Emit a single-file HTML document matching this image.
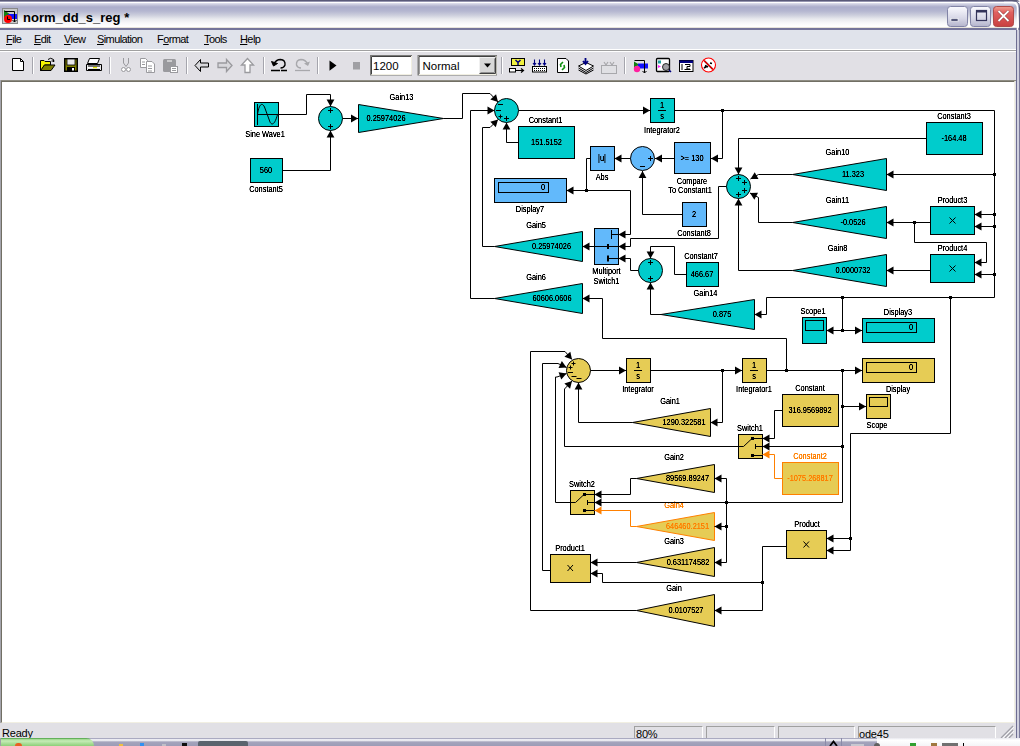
<!DOCTYPE html>
<html><head><meta charset="utf-8"><style>
*{margin:0;padding:0;box-sizing:border-box}
html,body{width:1020px;height:746px;overflow:hidden;background:#fff;font-family:"Liberation Sans",sans-serif}
.abs{position:absolute}
#title{left:0;top:0;width:1020px;height:30px;
 background:linear-gradient(to bottom,#5a5a78 0px,#5a5a78 1px,#9696b0 1px,#9696b0 2px,#ffffff 2px,#ffffff 3px,#e2e2ee 3px,#c4c5da 5px,#acaecb 7px,#b4b6d0 11px,#cbcddc 15px,#e8e9ee 19px,#f8f8fa 23px,#ffffff 26px,#ffffff 27px,#e8e4dc 27px,#e8e4dc 28px,#74749a 28px,#74749a 30px)}
#ttext{left:23px;top:10px;font-size:13px;font-weight:bold;color:#000;letter-spacing:0px}
#menu{left:0;top:30px;width:1016px;height:19px;background:#e0e3eb;font-size:11px}
#menu span{position:absolute;top:3px;letter-spacing:-0.6px}
#sep1{left:0;top:49px;width:1016px;height:3px;background:linear-gradient(to bottom,#fff 0,#fff 1px,#a0a0a0 1px,#a0a0a0 2px,#fff 2px)}
#tool{left:0;top:52px;width:1016px;height:28px;background:#e1e0e5}
#canvas{left:1px;top:80px;width:1014px;height:643px;background:#fff;border-top:2px solid #716f64;border-left:1px solid #716f64;border-right:1px solid #f1efe2;border-bottom:1px solid #f1efe2}
#status{left:0;top:723px;width:1016px;height:15px;background:#e1e0e5;font-size:11px}
#frameR{left:1016px;top:30px;width:4px;height:708px;background:linear-gradient(to right,#6e6e92 0,#6e6e92 1px,#8e8eaa 1px,#8e8eaa 1.5px,#d0d0de 1.5px,#d0d0de 3px,#7a7a9a 3px)}
#task{left:0;top:738px;width:1020px;height:8px;background:linear-gradient(to bottom,#7c7c9c 0,#d8d8e6 1px,#ffffff 2px,#a4a4bc 4px,#9c9cb6 8px)}
#start{left:0;top:738px;width:94px;height:8px;background:linear-gradient(to bottom,#2c8a2c 0,#9ad68a 1px,#c6ecb6 3px,#8ccf78 8px);border-top-right-radius:8px}
.sp{position:absolute;top:726px;height:12px;border-top:1px solid #a0a0a0;border-left:1px solid #a0a0a0;border-right:1px solid #fff}
svg text{font-family:"Liberation Sans",sans-serif}
</style></head><body>
<div id="title" class="abs"></div>
<svg class="abs" style="left:1004px;top:0" width="16" height="30"><path d="M0,0.5H8Q15.5,0.5 15.5,8V30" fill="none" stroke="#5a5a78"/><path d="M0,2.5H8Q13.5,2.5 13.5,8V30" fill="none" stroke="#fff" stroke-width="1.5"/><path d="M15,0V30" stroke="#9a9ab4" stroke-width="0"/><rect x="16" y="0" width="0" height="0"/><path d="M12,0H16V4Q16,0 12,0Z" fill="#f4eef0"/></svg>
<svg class="abs" style="left:2px;top:8px" width="17" height="16" viewBox="0 0 17 16">
<rect x="0.5" y="0.5" width="15" height="15" fill="#c8c8c8" stroke="#888"/>
<polygon points="2,2 9,7 2,11" fill="#108010"/><rect x="6" y="6" width="9" height="5" fill="#1010ff"/>
<circle cx="6" cy="11" r="4" fill="#ff0000"/><path d="M2.5,3.5H12.5V14M10.5,12L12.5,14L14.5,12M5.5,8.5V11.5H8" stroke="#000" fill="none"/>
</svg>
<div id="ttext" class="abs">norm_dd_s_reg *</div>
<svg class="abs" style="left:947px;top:6px" width="68" height="22" viewBox="0 0 68 22">
<defs><linearGradient id="gb" x1="0" y1="0" x2="0" y2="1"><stop offset="0" stop-color="#fbfbff"/><stop offset="0.6" stop-color="#d6d6e6"/><stop offset="1" stop-color="#b4b4cc"/></linearGradient>
<linearGradient id="gr" x1="0" y1="0" x2="0" y2="1"><stop offset="0" stop-color="#f0a090"/><stop offset="0.3" stop-color="#e06060"/><stop offset="1" stop-color="#c84040"/></linearGradient></defs>
<rect x="0.5" y="0.5" width="20" height="20" rx="3" fill="url(#gb)" stroke="#8284a6"/>
<rect x="4" y="12.5" width="7" height="3" fill="#55587a" stroke="#fff" stroke-width="0.6"/>
<rect x="23.5" y="0.5" width="20" height="20" rx="3" fill="url(#gb)" stroke="#8284a6"/>
<rect x="29.5" y="4.5" width="10" height="10" fill="none" stroke="#33335a" stroke-width="1.2"/><rect x="29" y="4" width="11" height="2.5" fill="#33335a"/>
<rect x="46.5" y="0.5" width="20" height="20" rx="3" fill="url(#gr)" stroke="#b04a48"/>
<path d="M51.5,5 L61.5,15 M61.5,5 L51.5,15" stroke="#601818" stroke-width="2.8" opacity="0.8"/><path d="M51.5,5 L61.5,15 M61.5,5 L51.5,15" stroke="#fff" stroke-width="2"/>
</svg>
<div id="frameR" class="abs"></div>
<div id="menu" class="abs">
<span style="left:6px"><u>F</u>ile</span><span style="left:34px"><u>E</u>dit</span><span style="left:64px"><u>V</u>iew</span><span style="left:97px"><u>S</u>imulation</span><span style="left:157px">F<u>o</u>rmat</span><span style="left:204px"><u>T</u>ools</span><span style="left:240px"><u>H</u>elp</span>
</div>
<div id="sep1" class="abs"></div>
<div id="tool" class="abs"></div>
<div id="canvas" class="abs"></div>
<div class="abs" style="left:0;top:80px;width:1px;height:643px;background:#a4a4ac"></div>
<div class="abs" style="left:1015px;top:80px;width:1px;height:643px;background:#e1e0e5"></div>
<div class="abs" style="left:1px;top:80px;width:1015px;height:1px;background:#8e8c82"></div>
<svg class="abs" style="left:0;top:50px" width="730" height="30" viewBox="0 50 730 30">
<g fill="none" stroke-width="1">
<!-- separators -->
<path d="M32.5,57V74M109.5,57V74M186.5,57V74M263.5,57V74M317.5,57V74M501.5,57V74M624.5,57V74" stroke="#a5a5ad"/>
<path d="M33.5,57V74M110.5,57V74M187.5,57V74M264.5,57V74M318.5,57V74M502.5,57V74M625.5,57V74" stroke="#fff"/>
<!-- new -->
<path d="M12.5,58.5H20.5L23.5,61.5V70.5H12.5Z" fill="#fff" stroke="#000"/>
<path d="M20.5,58.5V61.5H23.5" stroke="#000"/>
<!-- open -->
<path d="M40.5,60.5H44L45,61.5H50.5V65H44.5L41.5,70.5H40.5Z" fill="#f4f400" stroke="#000"/>
<path d="M40.5,70.5L44.5,65H55L51,70.5Z" fill="#808000" stroke="#000"/>
<path d="M48,59.5Q50.5,57 53.5,59.5M53.5,59.5V62M51.5,61H54.5" stroke="#000"/>
<!-- save -->
<rect x="64.5" y="58.5" width="13" height="13" fill="#000" stroke="#000"/>
<rect x="65.5" y="59.5" width="11" height="11" fill="#808000"/>
<rect x="67" y="59" width="8" height="6" fill="#e8e8e8" stroke="#000" stroke-width="0.8"/>
<rect x="67" y="67" width="8" height="4.5" fill="#000"/>
<rect x="72" y="68" width="2" height="2.5" fill="#fff"/>
<!-- print -->
<path d="M89.5,58.5H99.5L97.5,63.5H87.5Z" fill="#fff" stroke="#000"/>
<path d="M86.5,64.5H101.5V70.5H86.5Z" fill="#e8e8e8" stroke="#000"/>
<path d="M87.5,67.5H100" stroke="#fff" stroke-width="1.5"/>
<path d="M93,67.5H97" stroke="#e8e800" stroke-width="1.5"/>
<path d="M88,66H100M88,69.5H100" stroke="#000"/>
<!-- cut gray -->
<path d="M123.5,58V63L126,66.5L128.5,63V58" stroke="#9a9a9e"/>
<circle cx="123.5" cy="69.5" r="2" stroke="#9a9a9e" fill="#fff"/><circle cx="128.5" cy="69.5" r="2" stroke="#9a9a9e" fill="#fff"/>
<!-- copy gray -->
<path d="M140.5,58.5H145.5L147.5,60.5V67.5H140.5Z" fill="#fff" stroke="#9a9a9e"/>
<path d="M146.5,61.5H152L154.5,64V72.5H146.5Z" fill="#fff" stroke="#9a9a9e"/>
<path d="M142,62H145M142,64.5H145M148,66H152M148,68.5H152M148,71H152" stroke="#9a9a9e"/>
<!-- paste gray -->
<rect x="163" y="59" width="13" height="13" rx="1.5" fill="#9a9a9e"/>
<path d="M167,61H172" stroke="#fff"/>
<rect x="170.5" y="66.5" width="7" height="6" fill="#fff" stroke="#9a9a9e"/>
<path d="M172,68.5H176M172,70.5H176" stroke="#9a9a9e"/>
<!-- back -->
<path d="M195,65.5L200.5,59.5V63H208.5V67H200.5V71.5Z" fill="#d8d8dc" stroke="#000"/>
<!-- forward gray -->
<path d="M232,65.5L226.5,59.5V63H218V67.5H226.5V71.5Z" fill="#d8d8dc" stroke="#9a9a9e" stroke-width="1.3"/>
<!-- up gray -->
<path d="M247.5,58.5L241.5,65H245V72.5H250V65H253.5Z" fill="#fff" stroke="#9a9a9e" stroke-width="1.3"/>
<!-- undo -->
<path d="M273.5,64.5Q276,59.5 280.5,59.5Q285.5,60 285,65Q284,68 280.5,68" stroke="#000" stroke-width="1.4"/>
<path d="M271.5,61.5L273.5,66L277.5,63.5Z" fill="#000" stroke="#000"/>
<path d="M271,70.5H280M281,70.5H287" stroke="#000" stroke-width="1.3" stroke-dasharray="9 1 1 1 1 1 1 1"/>
<!-- redo gray -->
<path d="M308,64.5Q305.5,59.5 301,59.5Q296,60 296.5,65Q297.5,68 301,68" stroke="#a8a8ac" stroke-width="1.4"/>
<path d="M310,61.5L308,66L304,63.5Z" fill="#a8a8ac"/>
<path d="M295,70.5H310" stroke="#a8a8ac" stroke-width="1.3"/>
<!-- play -->
<path d="M329.5,60.5L336.5,65.5L329.5,70.8Z" fill="#000"/>
<rect x="353" y="62" width="7" height="7.5" fill="#a0a0a4"/>
<!-- edit box -->
<rect x="370.5" y="55.5" width="41" height="19.5" fill="#fff" stroke="#7a7a78"/>
<path d="M371.5,74.5V56.5H411" stroke="#404040"/>
<path d="M371.5,74.5H411.5V56" stroke="#f1efe2"/>
<!-- combo -->
<rect x="418" y="55.5" width="78.5" height="19.5" fill="#fff" stroke="#7a7a78"/>
<path d="M419,74.5V56.5H496" stroke="#404040"/>
<path d="M419,74.5H496V56" stroke="#f1efe2"/>
<rect x="479.5" y="57.5" width="15.5" height="16" fill="#d8d8d8" stroke="#f0f0f0"/>
<path d="M479.5,73.5H495.5V57.5" stroke="#404040"/>
<path d="M480.5,72.5H494.5V58.5" stroke="#909090"/>
<path d="M484,63.5H491L487.5,67.5Z" fill="#000"/>
<!-- simulink icons -->
<rect x="511.5" y="58.5" width="13" height="7" fill="#f0f040" stroke="#000"/>
<path d="M515.5,60L518,62.5L520.5,60M518,62.5V65" stroke="#000080" stroke-width="1.5"/>
<rect x="509.5" y="68.5" width="6" height="3.5" fill="#fff" stroke="#000"/>
<path d="M515.5,70.5H523M521,68.5L523.5,70.5L521,72.5" stroke="#000" stroke-width="1.2"/>
<rect x="532.5" y="66.5" width="14" height="5.5" fill="#fff" stroke="#000"/>
<path d="M534,68.5H545M534,70.5H545" stroke="#000" stroke-dasharray="1 1"/>
<path d="M534.5,59.5V65M539.5,59.5V65M544.5,59.5V65M533,63L534.5,65L536,63M538,63L539.5,65L541,63M543,63L544.5,65L546,63" stroke="#000080" stroke-width="1.1"/>
<path d="M557.5,58.5H566L568.5,61V72.5H557.5Z" fill="#fff" stroke="#000"/>
<path d="M563,62L560.5,64.5L561,67M562,70L564.5,67.5L564,65" stroke="#109010" stroke-width="1.6"/>
<path d="M578.5,66L586,62.5L593.5,66L586,70.5Z" fill="#fff" stroke="#000"/>
<path d="M578.5,68L586,72.5L593.5,68M578.5,70L586,74L593.5,70" stroke="#000"/>
<path d="M585.5,58V63.5M583,61L585.5,64L588,61" stroke="#000080" stroke-width="1.8"/>
<rect x="601.5" y="65.5" width="15" height="8" fill="#e0e0e4" stroke="#a8a8ac"/>
<path d="M604,62L606,65L608,62M610,62L612,65L614,62" stroke="#a8a8ac" stroke-width="1.2"/>
<!-- model browser etc -->
<path d="M634,61.5L639,64.5L634,69Z" fill="#108010"/>
<rect x="638" y="63.5" width="10" height="5" fill="#1010ff"/>
<circle cx="637" cy="69" r="3.2" fill="#ff20a0"/>
<path d="M634.5,60.5H644.5V73M642.5,71L644.5,73L646.5,71" stroke="#000"/>
<rect x="656.5" y="58.5" width="13" height="13" rx="1" fill="#fff" stroke="#000" stroke-width="1.3"/>
<rect x="658" y="60.5" width="3" height="3" fill="#20a0a0"/><path d="M658,65L661,66.5L658,68Z" fill="#ff20ff"/>
<circle cx="666" cy="67" r="3.5" fill="#a0a0a4" stroke="#000" stroke-width="0.8"/>
<path d="M669,70L671,72" stroke="#000080" stroke-width="1.5"/>
<rect x="679.5" y="60.5" width="13.5" height="11" fill="#fff" stroke="#000"/>
<rect x="679.5" y="60.5" width="13.5" height="2.5" fill="#000080"/>
<path d="M682,64V70M685,64.5H690V66.5H687V69H690M684.5,69.5H690.5" stroke="#000"/>
<circle cx="708.5" cy="65" r="7" fill="#fff" stroke="#ff0000" stroke-width="1.1"/>
<path d="M704.5,61L712.5,69M705,65.5L708,67M710,63L712,63.5M704,68L706.5,66.5" stroke="#000" stroke-width="1.6"/>
<path d="M703.5,60L713.5,70" stroke="#ff0000" stroke-width="1.1"/>
</g>
<text x="373" y="69.5" font-size="11.5" font-family="Liberation Sans" fill="#000">1200</text>
<text x="422.5" y="69.5" font-size="11.5" font-family="Liberation Sans" fill="#000">Normal</text>
</svg>

<div id="status" class="abs"><span style="position:absolute;left:2px;top:4px;letter-spacing:-0.2px">Ready</span></div>
<div class="sp" style="left:634px;width:69px"><span style="position:absolute;left:1px;top:1px;font-size:11px;letter-spacing:-0.2px">80%</span></div>
<div class="sp" style="left:706px;width:69px"></div>
<div class="sp" style="left:778px;width:77px"></div>
<div class="sp" style="left:858px;width:138px"><span style="position:absolute;left:0px;top:1px;font-size:11px;letter-spacing:-0.2px">ode45</span></div>
<svg class="abs" style="left:1000px;top:724px" width="15" height="14"><path d="M13,2L1,14M13,6L5,14M13,10L9,14" stroke="#a0a0a8" stroke-width="1.2"/><path d="M14,3L2,15M14,7L6,15" stroke="#fff" stroke-width="0.8"/></svg>
<div id="task" class="abs"></div>
<div id="start" class="abs"></div>
<div class="abs" style="left:0;top:738px;width:1px;height:8px;background:#a0a0a8"></div>
<div class="abs" style="left:198px;top:741px;width:50px;height:5px;background:#5a646e;border-radius:2px 2px 0 0"></div>
<div class="abs" style="left:825px;top:738px;width:17px;height:8px;border-left:1px solid #8a8aa8;border-right:1px solid #8a8aa8"></div>
<svg class="abs" style="left:829px;top:740px" width="9" height="6"><path d="M1,6L4.5,1.5L8,6" fill="none" stroke="#000" stroke-width="1.8"/></svg>
<div class="abs" style="left:877px;top:738px;width:143px;height:8px;background:linear-gradient(to bottom,#e8e8ee 0,#ffffff 2px,#f4f4f6 8px)"></div>
<div class="abs" style="left:15px;top:743px;width:7px;height:3px;background:#e86020;border-radius:3px 3px 0 0"></div>
<div class="abs" style="left:119px;top:744px;width:4px;height:2px;background:#f0c040"></div>
<div class="abs" style="left:140px;top:743px;width:4px;height:3px;background:#3090f0"></div>
<div class="abs" style="left:162px;top:744px;width:4px;height:2px;background:#c0c0c8"></div>
<div class="abs" style="left:182px;top:743px;width:5px;height:3px;background:#101010"></div>
<div class="abs" style="left:851px;top:744px;width:13px;height:2px;background:#c8c8d0"></div>
<div class="abs" style="left:874px;top:743px;width:6px;height:3px;border-radius:3px 3px 0 0;background:#606060"></div>
<div class="abs" style="left:910px;top:743px;width:6px;height:3px;background:#30a030"></div>
<div class="abs" style="left:931px;top:743px;width:6px;height:3px;background:#a07840"></div>
<div class="abs" style="left:942px;top:743px;width:16px;height:3px;background:#707070"></div>
<div class="abs" style="left:963px;top:743px;width:1px;height:3px;background:#000"></div>
<svg class="abs" style="left:0;top:0" width="1020" height="746" viewBox="0 0 1020 746" font-size="8">
<defs><filter id="thr" x="-20%" y="-50%" width="140%" height="200%"><feComponentTransfer><feFuncA type="linear" slope="1.7" intercept="-0.05"/></feComponentTransfer></filter></defs>
<rect x="254.5" y="102.5" width="24" height="24" fill="#00cccc" stroke="#000"/>
<path d="M257.5,104V125M257.5,114.5H278" stroke="#000" fill="none"/>
<path d="M257.5,114.5 C259,104 262,102 264.5,107 L270,122 C272,126 275,124 277.5,114.5" stroke="#000" fill="none"/>
<text filter="url(#thr)" transform="translate(265,136.6) scale(0.86,1)" text-anchor="middle" fill="#000" font-size="8.6">Sine Wave1</text>
<rect x="250.5" y="158.5" width="32" height="24" fill="#00cccc" stroke="#000"/>
<text filter="url(#thr)" transform="translate(266,173.1) scale(0.86,1)" text-anchor="middle" fill="#000" font-size="8.6">560</text>
<text filter="url(#thr)" transform="translate(266,192.1) scale(0.86,1)" text-anchor="middle" fill="#000" font-size="8.6">Constant5</text>
<circle cx="330.5" cy="118.5" r="12" fill="#00cccc" stroke="#000"/>
<path d="M328.0,110.5H333.0M330.5,108.0V113.0" stroke="#000" fill="none"/>
<path d="M328.0,126.5H333.0M330.5,124.0V129.0" stroke="#000" fill="none"/>
<polyline points="279,114.5 306.5,114.5 306.5,94.5 330.5,94.5 330.5,106.5" fill="none" stroke="#000"/>
<polygon points="330.50,106.50 326.60,99.50 334.40,99.50" fill="#000"/>
<polyline points="283,170.5 330.5,170.5 330.5,130.5" fill="none" stroke="#000"/>
<polygon points="330.50,130.50 334.40,137.50 326.60,137.50" fill="#000"/>
<polyline points="342.5,118.5 358,118.5" fill="none" stroke="#000"/>
<polygon points="358.00,118.50 351.00,122.40 351.00,114.60" fill="#000"/>
<polygon points="358.5,104.5 443.5,118.5 358.5,132.5" fill="#00cccc" stroke="#000"/>
<text filter="url(#thr)" transform="translate(386,121.0) scale(0.86,1)" text-anchor="middle" fill="#000" font-size="8.6">0.25974026</text>
<text filter="url(#thr)" transform="translate(401.5,100.1) scale(0.86,1)" text-anchor="middle" fill="#000" font-size="8.6">Gain13</text>
<circle cx="506.5" cy="110.5" r="12" fill="#00cccc" stroke="#000"/>
<path d="M498.0,104.5H503.0" stroke="#000" fill="none"/>
<path d="M496.0,110.5H501.0" stroke="#000" fill="none"/>
<path d="M498.5,116.5H502.5M500.5,114.5V118.5" stroke="#000" fill="none"/>
<path d="M504.0,118.5H509.0M506.5,116.0V121.0" stroke="#000" fill="none"/>
<polyline points="443.5,118.5 462.5,118.5 462.5,93.5 490,93.5 498,102" fill="none" stroke="#000"/>
<polygon points="498.00,102.00 490.36,99.58 496.04,94.23" fill="#000"/>
<polyline points="494.5,298.5 470.5,298.5 470.5,110.5 494.5,110.5" fill="none" stroke="#000"/>
<polygon points="494.50,110.50 487.50,114.40 487.50,106.60" fill="#000"/>
<polyline points="494.5,246.5 482.5,246.5 482.5,127.5 490,127.5 498,119.5" fill="none" stroke="#000"/>
<polygon points="498.00,119.50 495.81,127.21 490.29,121.69" fill="#000"/>
<rect x="518.5" y="126.5" width="56" height="32" fill="#00cccc" stroke="#000"/>
<text filter="url(#thr)" transform="translate(546.5,145.1) scale(0.86,1)" text-anchor="middle" fill="#000" font-size="8.6">151.5152</text>
<text filter="url(#thr)" transform="translate(545.5,123.1) scale(0.86,1)" text-anchor="middle" fill="#000" font-size="8.6">Constant1</text>
<polyline points="518,142.5 506.5,142.5 506.5,122.5" fill="none" stroke="#000"/>
<polygon points="506.50,122.50 510.40,129.50 502.60,129.50" fill="#000"/>
<polyline points="518.5,110.5 650,110.5" fill="none" stroke="#000"/>
<polygon points="650.00,110.50 643.00,114.40 643.00,106.60" fill="#000"/>
<rect x="650.5" y="98.5" width="24" height="24" fill="#00cccc" stroke="#000"/>
<text filter="url(#thr)" transform="translate(662,107.6) scale(0.86,1)" text-anchor="middle" fill="#000" font-size="8.6">1</text>
<path d="M658,110.5H666" stroke="#000"/>
<text filter="url(#thr)" transform="translate(662,119.1) scale(0.86,1)" text-anchor="middle" fill="#000" font-size="8.6">s</text>
<text filter="url(#thr)" transform="translate(662,132.6) scale(0.86,1)" text-anchor="middle" fill="#000" font-size="8.6">Integrator2</text>
<rect x="590.5" y="146.5" width="24" height="24" fill="#62b9fb" stroke="#000"/>
<text filter="url(#thr)" transform="translate(602,161.1) scale(0.86,1)" text-anchor="middle" fill="#000" font-size="8.6">|u|</text>
<text filter="url(#thr)" transform="translate(602,180.1) scale(0.86,1)" text-anchor="middle" fill="#000" font-size="8.6">Abs</text>
<circle cx="642.5" cy="158.5" r="12" fill="#62b9fb" stroke="#000"/>
<path d="M648.0,158.5H653.0M650.5,156.0V161.0" stroke="#000" fill="none"/>
<path d="M640.0,166.5H645.0" stroke="#000" fill="none"/>
<rect x="674.5" y="142.5" width="36" height="31" fill="#62b9fb" stroke="#000"/>
<text filter="url(#thr)" transform="translate(692,161.1) scale(0.86,1)" text-anchor="middle" fill="#000" font-size="8.6">&gt;= 130</text>
<text filter="url(#thr)" transform="translate(692,184.1) scale(0.86,1)" text-anchor="middle" fill="#000" font-size="8.6">Compare</text>
<text filter="url(#thr)" transform="translate(690,193.1) scale(0.86,1)" text-anchor="middle" fill="#000" font-size="8.6">To Constant1</text>
<rect x="682.5" y="202.5" width="24" height="24" fill="#62b9fb" stroke="#000"/>
<text filter="url(#thr)" transform="translate(694,217.1) scale(0.86,1)" text-anchor="middle" fill="#000" font-size="8.6">2</text>
<text filter="url(#thr)" transform="translate(694,236.1) scale(0.86,1)" text-anchor="middle" fill="#000" font-size="8.6">Constant8</text>
<rect x="494.5" y="178.5" width="72" height="24" fill="#62b9fb" stroke="#000"/>
<rect x="498.5" y="182.5" width="50" height="10" fill="#62b9fb" stroke="#000"/>
<text filter="url(#thr)" transform="translate(545,190.1) scale(0.86,1)" text-anchor="end" fill="#000" font-size="8.6">0</text>
<text filter="url(#thr)" transform="translate(530,212.1) scale(0.86,1)" text-anchor="middle" fill="#000" font-size="8.6">Display7</text>
<polygon points="494.5,246.5 582.5,231.5 582.5,261.5" fill="#00cccc" stroke="#000"/>
<text filter="url(#thr)" transform="translate(551.5,249.0) scale(0.86,1)" text-anchor="middle" fill="#000" font-size="8.6">0.25974026</text>
<text filter="url(#thr)" transform="translate(536,228.1) scale(0.86,1)" text-anchor="middle" fill="#000" font-size="8.6">Gain5</text>
<rect x="594.5" y="228.5" width="24" height="36" fill="#62b9fb" stroke="#000"/>
<path d="M611.5,234.5H618M611.5,230V239M594,246.5H618M607.5,258.5H618" stroke="#000" fill="none"/>
<rect x="607" y="244" width="2" height="5" fill="#000"/><rect x="607" y="255.5" width="2" height="6" fill="#000"/>
<text filter="url(#thr)" transform="translate(606.5,274.1) scale(0.86,1)" text-anchor="middle" fill="#000" font-size="8.6">Multiport</text>
<text filter="url(#thr)" transform="translate(606.5,284.1) scale(0.86,1)" text-anchor="middle" fill="#000" font-size="8.6">Switch1</text>
<circle cx="650.5" cy="270.5" r="12" fill="#00cccc" stroke="#000"/>
<path d="M648.0,262.5H653.0M650.5,260.0V265.0" stroke="#000" fill="none"/>
<path d="M648.0,278.5H653.0M650.5,276.0V281.0" stroke="#000" fill="none"/>
<rect x="686.5" y="262.5" width="32" height="24" fill="#00cccc" stroke="#000"/>
<text filter="url(#thr)" transform="translate(702,277.1) scale(0.86,1)" text-anchor="middle" fill="#000" font-size="8.6">466.67</text>
<text filter="url(#thr)" transform="translate(701,259.1) scale(0.86,1)" text-anchor="middle" fill="#000" font-size="8.6">Constant7</text>
<polygon points="661,314.5 754.5,299.5 754.5,329.5" fill="#00cccc" stroke="#000"/>
<text filter="url(#thr)" transform="translate(722,317.0) scale(0.86,1)" text-anchor="middle" fill="#000" font-size="8.6">0.875</text>
<text filter="url(#thr)" transform="translate(705.5,296.1) scale(0.86,1)" text-anchor="middle" fill="#000" font-size="8.6">Gain14</text>
<polygon points="494.5,298.5 582.5,283.5 582.5,313.5" fill="#00cccc" stroke="#000"/>
<text filter="url(#thr)" transform="translate(552,301.0) scale(0.86,1)" text-anchor="middle" fill="#000" font-size="8.6">60606.0606</text>
<text filter="url(#thr)" transform="translate(536,280.1) scale(0.86,1)" text-anchor="middle" fill="#000" font-size="8.6">Gain6</text>
<circle cx="738.5" cy="186.5" r="12" fill="#00cccc" stroke="#000"/>
<path d="M736.0,178.5H741.0M738.5,176.0V181.0" stroke="#000" fill="none"/>
<path d="M742.0,182.5H747.0M744.5,180.0V185.0" stroke="#000" fill="none"/>
<path d="M742.0,190.5H747.0M744.5,188.0V193.0" stroke="#000" fill="none"/>
<path d="M736.0,194.5H741.0M738.5,192.0V197.0" stroke="#000" fill="none"/>
<rect x="926.5" y="122.5" width="56" height="32" fill="#00cccc" stroke="#000"/>
<text filter="url(#thr)" transform="translate(954,141.1) scale(0.86,1)" text-anchor="middle" fill="#000" font-size="8.6">-164.48</text>
<text filter="url(#thr)" transform="translate(954,119.1) scale(0.86,1)" text-anchor="middle" fill="#000" font-size="8.6">Constant3</text>
<polygon points="792.5,174.5 886.5,158.5 886.5,190.5" fill="#00cccc" stroke="#000"/>
<text filter="url(#thr)" transform="translate(853,177.0) scale(0.86,1)" text-anchor="middle" fill="#000" font-size="8.6">11.323</text>
<text filter="url(#thr)" transform="translate(837.5,155.1) scale(0.86,1)" text-anchor="middle" fill="#000" font-size="8.6">Gain10</text>
<polygon points="792.5,222.5 886.5,206.5 886.5,238.5" fill="#00cccc" stroke="#000"/>
<text filter="url(#thr)" transform="translate(853,225.0) scale(0.86,1)" text-anchor="middle" fill="#000" font-size="8.6">-0.0526</text>
<text filter="url(#thr)" transform="translate(837.5,203.1) scale(0.86,1)" text-anchor="middle" fill="#000" font-size="8.6">Gain11</text>
<polygon points="792.5,270.5 886.5,254.5 886.5,286.5" fill="#00cccc" stroke="#000"/>
<text filter="url(#thr)" transform="translate(853,273.0) scale(0.86,1)" text-anchor="middle" fill="#000" font-size="8.6">0.0000732</text>
<text filter="url(#thr)" transform="translate(837.5,251.1) scale(0.86,1)" text-anchor="middle" fill="#000" font-size="8.6">Gain8</text>
<rect x="930.5" y="206.5" width="44" height="28" fill="#00cccc" stroke="#000"/>
<path d="M949.5,217.5L955.5,223.5M955.5,217.5L949.5,223.5" stroke="#000"/>
<text filter="url(#thr)" transform="translate(952.5,203.1) scale(0.86,1)" text-anchor="middle" fill="#000" font-size="8.6">Product3</text>
<rect x="930.5" y="254.5" width="44" height="28" fill="#00cccc" stroke="#000"/>
<path d="M949.5,265.5L955.5,271.5M955.5,265.5L949.5,271.5" stroke="#000"/>
<text filter="url(#thr)" transform="translate(952.5,251.1) scale(0.86,1)" text-anchor="middle" fill="#000" font-size="8.6">Product4</text>
<rect x="802.5" y="317.5" width="24" height="26" fill="#00cccc" stroke="#000"/>
<rect x="805.5" y="320.5" width="18" height="10" fill="#00cccc" stroke="#000"/>
<text filter="url(#thr)" transform="translate(813,314.1) scale(0.86,1)" text-anchor="middle" fill="#000" font-size="8.6">Scope1</text>
<rect x="862.5" y="318.5" width="72" height="24" fill="#00cccc" stroke="#000"/>
<rect x="866.5" y="322.5" width="50" height="10" fill="#00cccc" stroke="#000"/>
<text filter="url(#thr)" transform="translate(913,330.1) scale(0.86,1)" text-anchor="end" fill="#000" font-size="8.6">0</text>
<text filter="url(#thr)" transform="translate(898,315.1) scale(0.86,1)" text-anchor="middle" fill="#000" font-size="8.6">Display3</text>
<polyline points="674.5,110.5 994.5,110.5 994.5,297.5 766.5,297.5 766.5,314.5 754.5,314.5" fill="none" stroke="#000"/>
<polygon points="754.50,314.50 761.50,310.60 761.50,318.40" fill="#000"/>
<rect x="721.0" y="109.0" width="3" height="3" fill="#000"/>
<rect x="993.0" y="173.0" width="3" height="3" fill="#000"/>
<rect x="993.0" y="213.0" width="3" height="3" fill="#000"/>
<rect x="993.0" y="225.0" width="3" height="3" fill="#000"/>
<rect x="993.0" y="273.0" width="3" height="3" fill="#000"/>
<rect x="841.0" y="296.0" width="3" height="3" fill="#000"/>
<rect x="949.0" y="296.0" width="3" height="3" fill="#000"/>
<polyline points="722.5,110.5 722.5,158.5 711,158.5" fill="none" stroke="#000"/>
<polygon points="711.00,158.50 718.00,154.60 718.00,162.40" fill="#000"/>
<polyline points="674,158.5 655,158.5" fill="none" stroke="#000"/>
<polygon points="655.00,158.50 662.00,154.60 662.00,162.40" fill="#000"/>
<polyline points="630.5,158.5 614.5,158.5" fill="none" stroke="#000"/>
<polygon points="614.50,158.50 621.50,154.60 621.50,162.40" fill="#000"/>
<polyline points="590,158.5 586.5,158.5 586.5,190.5 566.5,190.5" fill="none" stroke="#000"/>
<polygon points="566.50,190.50 573.50,186.60 573.50,194.40" fill="#000"/>
<rect x="585.0" y="189.0" width="3" height="3" fill="#000"/>
<polyline points="586.5,190.5 630.5,190.5 630.5,234.5 618.5,234.5" fill="none" stroke="#000"/>
<polygon points="618.50,234.50 625.50,230.60 625.50,238.40" fill="#000"/>
<polyline points="682,214.5 642.5,214.5 642.5,171" fill="none" stroke="#000"/>
<polygon points="642.50,171.00 646.40,178.00 638.60,178.00" fill="#000"/>
<polyline points="726.5,186.5 718.5,186.5 718.5,238.5 630.5,238.5 630.5,246.5 618.5,246.5" fill="none" stroke="#000"/>
<polygon points="618.50,246.50 625.50,242.60 625.50,250.40" fill="#000"/>
<polyline points="638.5,270.5 630.5,270.5 630.5,258.5 618.5,258.5" fill="none" stroke="#000"/>
<polygon points="618.50,258.50 625.50,254.60 625.50,262.40" fill="#000"/>
<polyline points="594,246.5 582.5,246.5" fill="none" stroke="#000"/>
<polygon points="582.50,246.50 589.50,242.60 589.50,250.40" fill="#000"/>
<polyline points="686,274.5 674.5,274.5 674.5,246.5 650.5,246.5 650.5,258.5" fill="none" stroke="#000"/>
<polygon points="650.50,258.50 646.60,251.50 654.40,251.50" fill="#000"/>
<polyline points="661,314.5 650.5,314.5 650.5,282.5" fill="none" stroke="#000"/>
<polygon points="650.50,282.50 654.40,289.50 646.60,289.50" fill="#000"/>
<polyline points="786.5,370.5 786.5,338.5 602.5,338.5 602.5,298.5 582.5,298.5" fill="none" stroke="#000"/>
<polygon points="582.50,298.50 589.50,294.60 589.50,302.40" fill="#000"/>
<polyline points="926,138.5 738.5,138.5 738.5,174.5" fill="none" stroke="#000"/>
<polygon points="738.50,174.50 734.60,167.50 742.40,167.50" fill="#000"/>
<polyline points="792.5,174.5 758.5,174.5 750.5,179" fill="none" stroke="#000"/>
<polygon points="750.50,179.00 754.69,172.17 758.51,178.97" fill="#000"/>
<polyline points="792.5,222.5 758.5,222.5 758.5,197.5 750,193" fill="none" stroke="#000"/>
<polygon points="750.00,193.00 758.01,192.83 754.36,199.72" fill="#000"/>
<polyline points="792.5,270.5 738.5,270.5 738.5,198.5" fill="none" stroke="#000"/>
<polygon points="738.50,198.50 742.40,205.50 734.60,205.50" fill="#000"/>
<polyline points="994.5,174.5 886.5,174.5" fill="none" stroke="#000"/>
<polygon points="886.50,174.50 893.50,170.60 893.50,178.40" fill="#000"/>
<polyline points="994.5,214.5 974.5,214.5" fill="none" stroke="#000"/>
<polygon points="974.50,214.50 981.50,210.60 981.50,218.40" fill="#000"/>
<polyline points="994.5,226.5 974.5,226.5" fill="none" stroke="#000"/>
<polygon points="974.50,226.50 981.50,222.60 981.50,230.40" fill="#000"/>
<polyline points="930,222.5 886.5,222.5" fill="none" stroke="#000"/>
<polygon points="886.50,222.50 893.50,218.60 893.50,226.40" fill="#000"/>
<rect x="913.0" y="221.0" width="3" height="3" fill="#000"/>
<polyline points="914.5,222.5 914.5,242.5 986.5,242.5 986.5,262.5 974.5,262.5" fill="none" stroke="#000"/>
<polygon points="974.50,262.50 981.50,258.60 981.50,266.40" fill="#000"/>
<polyline points="994.5,274.5 974.5,274.5" fill="none" stroke="#000"/>
<polygon points="974.50,274.50 981.50,270.60 981.50,278.40" fill="#000"/>
<polyline points="930,270.5 886.5,270.5" fill="none" stroke="#000"/>
<polygon points="886.50,270.50 893.50,266.60 893.50,274.40" fill="#000"/>
<polyline points="842.5,297.5 842.5,330.5 826.5,330.5" fill="none" stroke="#000"/>
<polygon points="826.50,330.50 833.50,326.60 833.50,334.40" fill="#000"/>
<polyline points="842.5,330.5 862,330.5" fill="none" stroke="#000"/>
<polygon points="862.00,330.50 855.00,334.40 855.00,326.60" fill="#000"/>
<rect x="841.0" y="329.0" width="3" height="3" fill="#000"/>
<polyline points="950.5,297.5 950.5,433.5 850.5,433.5 850.5,538.5 826.5,538.5" fill="none" stroke="#000"/>
<polygon points="826.50,538.50 833.50,534.60 833.50,542.40" fill="#000"/>
<polyline points="850.5,538.5 850.5,550.5 826.5,550.5" fill="none" stroke="#000"/>
<polygon points="826.50,550.50 833.50,546.60 833.50,554.40" fill="#000"/>
<rect x="849.0" y="537.0" width="3" height="3" fill="#000"/>
<circle cx="578.5" cy="370.5" r="12" fill="#e6cc55" stroke="#000"/>
<path d="M571.5,363.5H575.5M573.5,361.5V365.5" stroke="#000" fill="none"/>
<path d="M568.5,367.5H572.5M570.5,365.5V369.5" stroke="#000" fill="none"/>
<path d="M568.0,372.5H573.0" stroke="#000" fill="none"/>
<path d="M571.5,376.5H576.5" stroke="#000" fill="none"/>
<path d="M576.5,378.5H581.5" stroke="#000" fill="none"/>
<rect x="626.5" y="358.5" width="24" height="24" fill="#e6cc55" stroke="#000"/>
<text filter="url(#thr)" transform="translate(638,367.6) scale(0.86,1)" text-anchor="middle" fill="#000" font-size="8.6">1</text>
<path d="M634,370.5H642" stroke="#000"/>
<text filter="url(#thr)" transform="translate(638,379.1) scale(0.86,1)" text-anchor="middle" fill="#000" font-size="8.6">s</text>
<text filter="url(#thr)" transform="translate(638,392.1) scale(0.86,1)" text-anchor="middle" fill="#000" font-size="8.6">Integrator</text>
<rect x="742.5" y="358.5" width="24" height="24" fill="#e6cc55" stroke="#000"/>
<text filter="url(#thr)" transform="translate(754,367.6) scale(0.86,1)" text-anchor="middle" fill="#000" font-size="8.6">1</text>
<path d="M750,370.5H758" stroke="#000"/>
<text filter="url(#thr)" transform="translate(754,379.1) scale(0.86,1)" text-anchor="middle" fill="#000" font-size="8.6">s</text>
<text filter="url(#thr)" transform="translate(754,392.1) scale(0.86,1)" text-anchor="middle" fill="#000" font-size="8.6">Integrator1</text>
<rect x="862.5" y="358.5" width="72" height="24" fill="#e6cc55" stroke="#000"/>
<rect x="866.5" y="362.5" width="50" height="10" fill="#e6cc55" stroke="#000"/>
<text filter="url(#thr)" transform="translate(913,370.1) scale(0.86,1)" text-anchor="end" fill="#000" font-size="8.6">0</text>
<text filter="url(#thr)" transform="translate(898,392.1) scale(0.86,1)" text-anchor="middle" fill="#000" font-size="8.6">Display</text>
<rect x="782.5" y="394.5" width="56" height="32" fill="#e6cc55" stroke="#000"/>
<text filter="url(#thr)" transform="translate(810,413.1) scale(0.86,1)" text-anchor="middle" fill="#000" font-size="8.6">316.9569892</text>
<text filter="url(#thr)" transform="translate(810,391.1) scale(0.86,1)" text-anchor="middle" fill="#000" font-size="8.6">Constant</text>
<rect x="866.5" y="394.5" width="24" height="24" fill="#e6cc55" stroke="#000"/>
<rect x="869.5" y="397.5" width="18" height="9" fill="#e6cc55" stroke="#000"/>
<text filter="url(#thr)" transform="translate(877,428.1) scale(0.86,1)" text-anchor="middle" fill="#000" font-size="8.6">Scope</text>
<polygon points="632.5,422.5 710.5,408.5 710.5,436.5" fill="#e6cc55" stroke="#000"/>
<text filter="url(#thr)" transform="translate(684,425.0) scale(0.86,1)" text-anchor="middle" fill="#000" font-size="8.6">1290.322581</text>
<text filter="url(#thr)" transform="translate(670,404.1) scale(0.86,1)" text-anchor="middle" fill="#000" font-size="8.6">Gain1</text>
<rect x="738.5" y="434.5" width="24" height="24" fill="#e6cc55" stroke="#000"/>
<path d="M738,446.5H743.5L752,438.5H762M755.5,446.5H762M755.5,444V449M752,455.5H762" stroke="#000" fill="none"/>
<rect x="751" y="437" width="3" height="3"/><rect x="751" y="454" width="3" height="3"/>
<text filter="url(#thr)" transform="translate(750,431.1) scale(0.86,1)" text-anchor="middle" fill="#000" font-size="8.6">Switch1</text>
<rect x="782.5" y="462.5" width="56" height="32" fill="#e6cc55" stroke="#ff8000"/>
<text filter="url(#thr)" transform="translate(810,481.1) scale(0.86,1)" text-anchor="middle" fill="#ff8000" font-size="8.6">-1075.268817</text>
<text filter="url(#thr)" transform="translate(810,459.1) scale(0.86,1)" text-anchor="middle" fill="#ff8000" font-size="8.6">Constant2</text>
<polygon points="636.5,478.5 714.5,464.5 714.5,492.5" fill="#e6cc55" stroke="#000"/>
<text filter="url(#thr)" transform="translate(687.5,481.0) scale(0.86,1)" text-anchor="middle" fill="#000" font-size="8.6">89569.89247</text>
<text filter="url(#thr)" transform="translate(674,460.1) scale(0.86,1)" text-anchor="middle" fill="#000" font-size="8.6">Gain2</text>
<rect x="570.5" y="490.5" width="24" height="24" fill="#e6cc55" stroke="#000"/>
<path d="M570,502.5H575.5L584,494.5H594M587.5,502.5H594M587.5,500V505M584,510.5H594" stroke="#000" fill="none"/>
<rect x="583" y="493" width="3" height="3"/><rect x="583" y="509" width="3" height="3"/>
<text filter="url(#thr)" transform="translate(582,487.1) scale(0.86,1)" text-anchor="middle" fill="#000" font-size="8.6">Switch2</text>
<polygon points="636.5,526.5 714.5,512.5 714.5,540.5" fill="#e6cc55" stroke="#ff8000"/>
<text filter="url(#thr)" transform="translate(687.5,529.0) scale(0.86,1)" text-anchor="middle" fill="#ff8000" font-size="8.6">646460.2151</text>
<text filter="url(#thr)" transform="translate(674,508.1) scale(0.86,1)" text-anchor="middle" fill="#ff8000" font-size="8.6">Gain4</text>
<polygon points="636.5,562.5 714.5,547.5 714.5,576.5" fill="#e6cc55" stroke="#000"/>
<text filter="url(#thr)" transform="translate(688,565.0) scale(0.86,1)" text-anchor="middle" fill="#000" font-size="8.6">0.631174582</text>
<text filter="url(#thr)" transform="translate(674,544.1) scale(0.86,1)" text-anchor="middle" fill="#000" font-size="8.6">Gain3</text>
<rect x="550.5" y="554.5" width="40" height="28" fill="#e6cc55" stroke="#000"/>
<path d="M567.5,565L573,571M573,565L567.5,571" stroke="#000"/>
<text filter="url(#thr)" transform="translate(570,551.1) scale(0.86,1)" text-anchor="middle" fill="#000" font-size="8.6">Product1</text>
<rect x="786.5" y="530.5" width="40" height="28" fill="#e6cc55" stroke="#000"/>
<path d="M803.5,541.5L809,547.5M809,541.5L803.5,547.5" stroke="#000"/>
<text filter="url(#thr)" transform="translate(807,527.1) scale(0.86,1)" text-anchor="middle" fill="#000" font-size="8.6">Product</text>
<polygon points="636.5,610.5 714.5,594.5 714.5,626.5" fill="#e6cc55" stroke="#000"/>
<text filter="url(#thr)" transform="translate(686,613.0) scale(0.86,1)" text-anchor="middle" fill="#000" font-size="8.6">0.0107527</text>
<text filter="url(#thr)" transform="translate(674,591.1) scale(0.86,1)" text-anchor="middle" fill="#000" font-size="8.6">Gain</text>
<polyline points="590.5,370.5 626,370.5" fill="none" stroke="#000"/>
<polygon points="626.00,370.50 619.00,374.40 619.00,366.60" fill="#000"/>
<polyline points="650.5,370.5 742,370.5" fill="none" stroke="#000"/>
<polygon points="742.00,370.50 735.00,374.40 735.00,366.60" fill="#000"/>
<rect x="721.0" y="369.0" width="3" height="3" fill="#000"/>
<polyline points="722.5,370.5 722.5,422.5 710.5,422.5" fill="none" stroke="#000"/>
<polygon points="710.50,422.50 717.50,418.60 717.50,426.40" fill="#000"/>
<polyline points="766.5,370.5 862,370.5" fill="none" stroke="#000"/>
<polygon points="862.00,370.50 855.00,374.40 855.00,366.60" fill="#000"/>
<rect x="785.0" y="369.0" width="3" height="3" fill="#000"/>
<rect x="841.0" y="369.0" width="3" height="3" fill="#000"/>
<polyline points="842.5,370.5 842.5,502.5 594.5,502.5" fill="none" stroke="#000"/>
<polygon points="594.50,502.50 601.50,498.60 601.50,506.40" fill="#000"/>
<rect x="725.0" y="501.0" width="3" height="3" fill="#000"/>
<polyline points="842.5,406.5 866,406.5" fill="none" stroke="#000"/>
<polygon points="866.00,406.50 859.00,410.40 859.00,402.60" fill="#000"/>
<rect x="841.0" y="405.0" width="3" height="3" fill="#000"/>
<polyline points="842.5,446.5 762.5,446.5" fill="none" stroke="#000"/>
<polygon points="762.50,446.50 769.50,442.60 769.50,450.40" fill="#000"/>
<rect x="841.0" y="445.0" width="3" height="3" fill="#000"/>
<polyline points="782,410.5 774.5,410.5 774.5,438.5 762.5,438.5" fill="none" stroke="#000"/>
<polygon points="762.50,438.50 769.50,434.60 769.50,442.40" fill="#000"/>
<polyline points="782,478.5 774.5,478.5 774.5,454.5 762.5,454.5" fill="none" stroke="#ff8000"/>
<polygon points="762.50,454.50 769.50,450.60 769.50,458.40" fill="#ff8000"/>
<polyline points="738,446.5 564.5,446.5 564.5,389 572,381" fill="none" stroke="#000"/>
<polygon points="572.00,381.00 570.06,388.77 564.37,383.44" fill="#000"/>
<polyline points="632.5,422.5 578.5,422.5 578.5,382.5" fill="none" stroke="#000"/>
<polygon points="578.50,382.50 582.40,389.50 574.60,389.50" fill="#000"/>
<polyline points="726.5,502.5 726.5,478.5 714.5,478.5" fill="none" stroke="#000"/>
<polygon points="714.50,478.50 721.50,474.60 721.50,482.40" fill="#000"/>
<polyline points="726.5,502.5 726.5,562.5 714.5,562.5" fill="none" stroke="#000"/>
<polygon points="714.50,562.50 721.50,558.60 721.50,566.40" fill="#000"/>
<polyline points="726.5,526.5 714.5,526.5" fill="none" stroke="#000"/>
<polygon points="714.50,526.50 721.50,522.60 721.50,530.40" fill="#000"/>
<rect x="725.0" y="525.0" width="3" height="3" fill="#000"/>
<polyline points="636.5,478.5 630.5,478.5 630.5,494.5 594.5,494.5" fill="none" stroke="#000"/>
<polygon points="594.50,494.50 601.50,490.60 601.50,498.40" fill="#000"/>
<polyline points="636.5,526.5 630.5,526.5 630.5,510.5 594.5,510.5" fill="none" stroke="#ff8000"/>
<polygon points="594.50,510.50 601.50,506.60 601.50,514.40" fill="#ff8000"/>
<polyline points="570,502.5 555.5,502.5 555.5,377 557,377 566.5,373.5" fill="none" stroke="#000"/>
<polygon points="566.50,373.50 561.28,379.58 558.58,372.26" fill="#000"/>
<polyline points="636.5,562.5 590.5,562.5" fill="none" stroke="#000"/>
<polygon points="590.50,562.50 597.50,558.60 597.50,566.40" fill="#000"/>
<polyline points="550,570.5 542.5,570.5 542.5,363.5 558,363.5 566.5,367.5" fill="none" stroke="#000"/>
<polygon points="566.50,367.50 558.51,368.05 561.83,360.99" fill="#000"/>
<polyline points="786,546.5 762.5,546.5 762.5,610.5 714.5,610.5" fill="none" stroke="#000"/>
<polygon points="714.50,610.50 721.50,606.60 721.50,614.40" fill="#000"/>
<polyline points="762.5,582.5 602.5,582.5 602.5,573.5 590.5,573.5" fill="none" stroke="#000"/>
<polygon points="590.50,573.50 597.50,569.60 597.50,577.40" fill="#000"/>
<rect x="761.0" y="581.0" width="3" height="3" fill="#000"/>
<polyline points="636.5,610.5 530.5,610.5 530.5,351.5 565,351.5 572,359.5" fill="none" stroke="#000"/>
<polygon points="572.00,359.50 564.46,356.80 570.33,351.66" fill="#000"/>
</svg>
</body></html>
